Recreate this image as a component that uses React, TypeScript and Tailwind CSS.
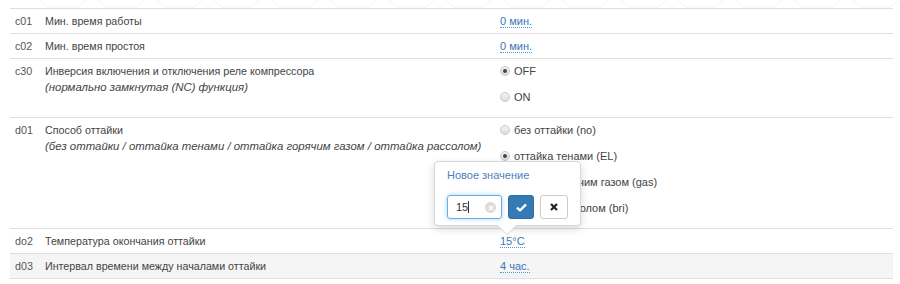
import * as React from 'react';

type Param = {
  code: string;
  name: string;
  hint?: string;
  value?: string;
  options?: { label: string; checked?: boolean }[];
  shaded?: boolean;
};

const params: Param[] = [
  { code: 'c01', name: 'Мин. время работы', value: '0 мин.' },
  { code: 'c02', name: 'Мин. время простоя', value: '0 мин.' },
  {
    code: 'c30',
    name: 'Инверсия включения и отключения реле компрессора',
    hint: '(нормально замкнутая (NC) функция)',
    options: [{ label: 'OFF', checked: true }, { label: 'ON' }],
  },
  {
    code: 'd01',
    name: 'Способ оттайки',
    hint: '(без оттайки / оттайка тенами / оттайка горячим газом / оттайка рассолом)',
    options: [
      { label: 'без оттайки (no)' },
      { label: 'оттайка тенами (EL)', checked: true },
      { label: 'оттайка горячим газом (gas)' },
      { label: 'оттайка рассолом (bri)' },
    ],
  },
  { code: 'do2', name: 'Температура окончания оттайки', value: '15°C' },
  { code: 'd03', name: 'Интервал времени между началами оттайки', value: '4 час.', shaded: true },
];

const Radio = ({ checked }: { checked?: boolean }) => (
  <span className="w-[10px] h-[10px] rounded-full border border-[#c8c8c8] bg-gradient-to-b from-[#f4f4f4] to-[#dcdcdc] flex items-center justify-center shrink-0">
    {checked && <span className="w-[4px] h-[4px] rounded-full bg-[#444]" />}
  </span>
);

const Row = ({ p }: { p: Param }) => (
  <div className={`flex border-b border-[#dedede] ${p.shaded ? 'bg-[#f5f5f5]' : ''}`}>
    <div className="w-[30px] pl-[5px] py-[4px] text-[#555]">{p.code}</div>
    <div className="w-[455px] pl-[5px] py-[4px] text-[#444]">
      <div>{p.name}</div>
      {p.hint && <div className="italic text-[11.4px]">{p.hint}</div>}
    </div>
    <div className="flex-1 pl-[5px] py-[4px] text-[11px]">
      {p.value && (
        <span className="text-[#3b78b8] border-b border-dotted border-[#4a9ad0]">{p.value}</span>
      )}
      {p.options && (
        <div className="flex flex-col gap-[10px] pb-[8px]">
          {p.options.map((o) => (
            <label key={o.label} className="flex items-center gap-[4px] text-[#444]">
              <Radio checked={o.checked} />
              <span>{o.label}</span>
            </label>
          ))}
        </div>
      )}
    </div>
  </div>
);

const Popover = () => (
  <div className="absolute left-[424px] top-[152px] w-[147px] bg-white border border-[#d6d6d6] rounded-[4px] shadow-[0_3px_8px_rgba(0,0,0,0.15)] px-[12px] pt-[5px] pb-[6px] text-[11px]">
    <div className="text-[#4a82bd] leading-[16px]">Новое значение</div>
    <div className="flex items-center gap-[6px] mt-[12px]">
      <div className="relative w-[55px] h-[24px] border border-[#66afe9] rounded-[3px] shadow-[0_0_4px_rgba(102,175,233,0.6)] flex items-center pl-[8px] text-[#333]">
        <span>15</span>
        <span className="w-px h-[12px] bg-[#333]" />
        <span className="absolute right-[5px] top-[6px] w-[11px] h-[11px] rounded-full bg-[#dcdcdc] flex items-center justify-center">
          <svg width="6" height="6" viewBox="0 0 6 6">
            <path d="M1 1L5 5M5 1L1 5" stroke="#fff" strokeWidth="1.3" />
          </svg>
        </span>
      </div>
      <div className="w-[26px] h-[24px] rounded-[3px] bg-[#337ab7] border border-[#2e6da4] flex items-center justify-center">
        <svg width="11" height="9" viewBox="0 0 11 9">
          <path d="M1 4.6L4 7.5L10 1.3" stroke="#fff" strokeWidth="2.4" fill="none" strokeLinejoin="round" />
        </svg>
      </div>
      <div className="w-[28px] h-[24px] rounded-[3px] bg-white border border-[#ccc] flex items-center justify-center">
        <svg width="8" height="8" viewBox="0 0 8 8">
          <path d="M1 1L7 7M7 1L1 7" stroke="#222" strokeWidth="2.2" />
        </svg>
      </div>
    </div>
    <svg className="absolute left-[62px] -bottom-[10px]" width="20" height="10" viewBox="0 0 20 10">
      <path d="M0 0L10 9.5L20 0" fill="#fff" stroke="#d6d6d6" strokeWidth="1" />
      <path d="M1 0L19 0" stroke="#fff" strokeWidth="2" />
    </svg>
  </div>
);

export default function App() {
  return (
    <div className="w-[900px] h-[284px] bg-white overflow-hidden font-['Liberation_Sans',Arial,sans-serif] text-[10.7px] leading-[16px]">
      <svg className="block" width="900" height="8" viewBox="0 0 900 8">
        {Array.from({ length: 16 }).map((_, i) => (
          <path key={i} d={`M${i * 58 + 40} 0L${i * 58 + 48} 7L${i * 58 + 78} 7L${i * 58 + 86} 0`} stroke="#f3f3f3" fill="none" />
        ))}
      </svg>
      <div className="relative ml-[10px] w-[883px] border-t border-[#dedede]">
        {params.map((p) => (
          <Row key={p.code} p={p} />
        ))}
        <Popover />
      </div>
    </div>
  );
}
